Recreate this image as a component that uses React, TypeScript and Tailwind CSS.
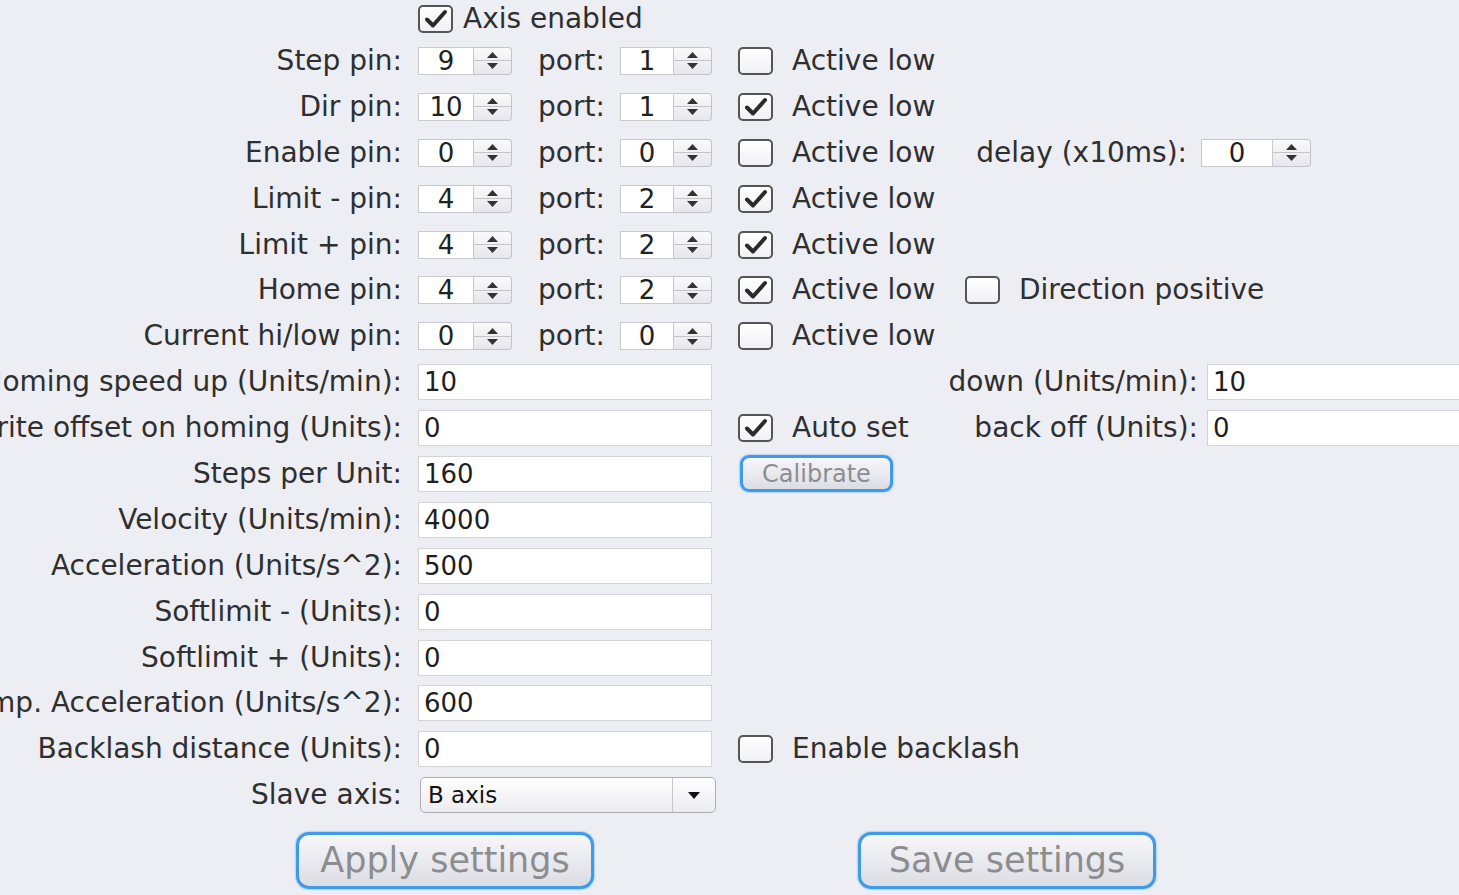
import type { ReactNode } from "react";

// Axis configuration panel: pin mapping, motion limits and homing options.

const font = "font-['DejaVu_Sans',sans-serif]";

function Check({ on = false }: { on?: boolean }) {
  return (
    <span className="flex h-[28px] w-[35px] shrink-0 items-center justify-center rounded-[5px] border-2 border-[#555] bg-gradient-to-b from-white to-[#f1f1f5]">
      {on && (
        <svg width="26" height="22" viewBox="0 0 26 22">
          <path
            d="M4 11.5 L10 17.5 L22 4"
            fill="none"
            stroke="#2a2a2a"
            strokeWidth="4"
            strokeLinecap="round"
            strokeLinejoin="round"
          />
        </svg>
      )}
    </span>
  );
}

function CheckLabel({ on, text, gap = "gap-[19px]" }: { on?: boolean; text: string; gap?: string }) {
  return (
    <span className={`flex items-center whitespace-nowrap ${gap}`}>
      <Check on={on} />
      <span>{text}</span>
    </span>
  );
}

function Spinner({ value, field = 56 }: { value: string; field?: number }) {
  return (
    <span className="flex h-[28px] shrink-0">
      <span
        className="flex h-full items-center justify-center border border-[#c9c9cf] bg-white text-[26px] text-[#222]"
        style={{ width: field }}
      >
        {value}
      </span>
      <span className="flex h-full w-[38px] flex-col rounded-r-[4px] border border-l-0 border-[#c3c3c9] bg-gradient-to-b from-[#fafafc] to-[#e6e6ec]">
        <span className="flex flex-1 items-end justify-center pb-[2px]">
          <svg width="11" height="6" viewBox="0 0 11 6">
            <path d="M5.5 0 L11 6 L0 6 Z" fill="#333" />
          </svg>
        </span>
        <span className="h-px bg-[#c3c3c9]" />
        <span className="flex flex-1 items-start justify-center pt-[2px]">
          <svg width="11" height="6" viewBox="0 0 11 6">
            <path d="M0 0 L11 0 L5.5 6 Z" fill="#333" />
          </svg>
        </span>
      </span>
    </span>
  );
}

function PinPort({ pin, port }: { pin: string; port: string }) {
  return (
    <span className="flex items-center">
      <Spinner value={pin} />
      <span className="ml-[26px] w-[82px]">port:</span>
      <Spinner value={port} field={54} />
    </span>
  );
}

function Field({ value, className = "w-[294px]" }: { value: string; className?: string }) {
  return (
    <span className={`flex h-[36px] shrink-0 items-center border border-[#d3d3d8] bg-white pl-[5px] text-[26px] text-[#1e1e1e] ${className}`}>
      {value}
    </span>
  );
}

function Row({ label, mid, side, extra }: { label?: string; mid?: ReactNode; side?: ReactNode; extra?: ReactNode }) {
  return (
    <div className="flex h-[45.9px] items-center">
      <div className="flex w-[402px] shrink-0 justify-end whitespace-nowrap">{label}</div>
      <div className="ml-[16px] flex w-[294px] shrink-0 items-center">{mid}</div>
      <div className="ml-[26px] flex w-[200px] shrink-0 items-center">{side}</div>
      <div className="flex items-center whitespace-nowrap">{extra}</div>
    </div>
  );
}

function BlueButton({ text, className }: { text: string; className: string }) {
  return (
    <button
      className={`flex shrink-0 items-center justify-center border-[3px] border-[#3d9be9] bg-gradient-to-b from-[#f7f7fa] to-[#dcdde4] text-[#8d8d90] shadow-[0_0_2px_#3d9be9] ${className}`}
    >
      {text}
    </button>
  );
}

export default function App() {
  return (
    <div className={`h-[895px] w-[1459px] overflow-hidden bg-[#ededf4] text-[28px] leading-none text-[#2f2f2f] ${font}`}>
      <div className="flex h-[38px] items-center pl-[418px]">
        <CheckLabel on text="Axis enabled" gap="gap-[10px]" />
      </div>

      <Row label="Step pin:" mid={<PinPort pin="9" port="1" />} side={<CheckLabel text="Active low" />} />
      <Row label="Dir pin:" mid={<PinPort pin="10" port="1" />} side={<CheckLabel on text="Active low" />} />
      <Row
        label="Enable pin:"
        mid={<PinPort pin="0" port="0" />}
        side={<CheckLabel text="Active low" />}
        extra={
          <>
            <span className="flex w-[249px] justify-end">delay (x10ms):</span>
            <span className="ml-[14px]">
              <Spinner value="0" field={72} />
            </span>
          </>
        }
      />
      <Row label="Limit - pin:" mid={<PinPort pin="4" port="2" />} side={<CheckLabel on text="Active low" />} />
      <Row label="Limit + pin:" mid={<PinPort pin="4" port="2" />} side={<CheckLabel on text="Active low" />} />
      <Row
        label="Home pin:"
        mid={<PinPort pin="4" port="2" />}
        side={<CheckLabel on text="Active low" />}
        extra={
          <span className="ml-[27px]">
            <CheckLabel text="Direction positive" />
          </span>
        }
      />
      <Row label="Current hi/low pin:" mid={<PinPort pin="0" port="0" />} side={<CheckLabel text="Active low" />} />

      <Row
        label="Homing speed up (Units/min):"
        mid={<Field value="10" />}
        extra={
          <>
            <span className="flex w-[260px] justify-end">down (Units/min):</span>
            <span className="ml-[9px]">
              <Field value="10" className="w-[300px]" />
            </span>
          </>
        }
      />
      <Row
        label="Write offset on homing (Units):"
        mid={<Field value="0" />}
        side={<CheckLabel on text="Auto set" />}
        extra={
          <>
            <span className="flex w-[260px] justify-end">back off (Units):</span>
            <span className="ml-[9px]">
              <Field value="0" className="w-[300px]" />
            </span>
          </>
        }
      />
      <Row
        label="Steps per Unit:"
        mid={<Field value="160" />}
        side={<BlueButton text="Calibrate" className="ml-[2px] h-[37px] w-[153px] rounded-[9px] text-[24px]" />}
      />
      <Row label="Velocity (Units/min):" mid={<Field value="4000" />} />
      <Row label="Acceleration (Units/s^2):" mid={<Field value="500" />} />
      <Row label="Softlimit - (Units):" mid={<Field value="0" />} />
      <Row label="Softlimit + (Units):" mid={<Field value="0" />} />
      <Row label="Jmp. Acceleration (Units/s^2):" mid={<Field value="600" />} />
      <Row label="Backlash distance (Units):" mid={<Field value="0" />} side={<CheckLabel text="Enable backlash" />} />
      <Row
        label="Slave axis:"
        mid={
          <span className="ml-[2px] flex h-[36px] w-[296px] shrink-0 rounded-[5px] border border-[#adadb3] bg-gradient-to-b from-white to-[#ececf0] text-[23px] text-[#111]">
            <span className="flex flex-1 items-center pl-[7px]">B axis</span>
            <span className="flex w-[43px] items-center justify-center border-l border-[#c6c6cc]">
              <svg width="12" height="7" viewBox="0 0 12 7">
                <path d="M0 0 L12 0 L6 7 Z" fill="#111" />
              </svg>
            </span>
          </span>
        }
      />

      <div className="mt-[14px] flex pl-[296px]">
        <BlueButton text="Apply settings" className="h-[57px] w-[298px] rounded-[13px] text-[35px]" />
        <BlueButton text="Save settings" className="ml-[264px] h-[57px] w-[298px] rounded-[13px] text-[35px]" />
      </div>
    </div>
  );
}
